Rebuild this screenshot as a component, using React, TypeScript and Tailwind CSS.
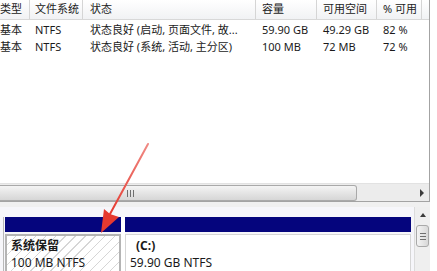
import React from 'react';

const font = "font-['Noto_Sans','Noto_Sans_CJK_SC',sans-serif]";

type Row = string[];

const rows: Row[] = [
  ['基本', 'NTFS', '状态良好 (启动, 页面文件, 故...', '59.90 GB', '49.29 GB', '82 %'],
  ['基本', 'NTFS', '状态良好 (系统, 活动, 主分区)', '100 MB', '72 MB', '72 %'],
];

const headers = ['类型', '文件系统', '状态', '容量', '可用空间', '% 可用'];
const widths = ['w-[30px]', 'w-[53px]', 'w-[173px]', 'w-[61px]', 'w-[60px]', 'w-[45px]'];
const pads = ['pl-0', 'pl-[5px]', 'pl-[7px]', 'pl-[6px]', 'pl-[6px]', 'pl-[6px]'];

function ListPane() {
  return (
    <div className="flex h-[202px] w-[430px] flex-col border-r border-b border-[#a3a3a3] bg-white">
      {/* column headers */}
      <div className="flex h-[20px] border-b border-[#d8d8d8] bg-gradient-to-b from-white to-[#f1f2f4]">
        {headers.map((h, i) => (
          <div
            key={h}
            className={`${widths[i]} ${pads[i]} flex shrink-0 items-center border-r border-[#d5d5d5] text-[11px] whitespace-nowrap text-[#222]`}
          >
            {h}
          </div>
        ))}
        <div className="flex-1" />
      </div>

      {/* volume rows */}
      <div className="flex flex-col pt-[1px]">
        {rows.map((r, ri) => (
          <div key={ri} className="flex h-[17px] items-center">
            {r.map((c, i) => (
              <div
                key={i}
                className={`${widths[i]} ${pads[i]} shrink-0 overflow-hidden text-[11px] leading-[17px] whitespace-nowrap text-[#1a1a1a]`}
              >
                {c}
              </div>
            ))}
          </div>
        ))}
      </div>

      <div className="flex-1" />

      {/* horizontal scrollbar */}
      <div className="flex h-[18px] items-center border-t border-[#e2e2e2] bg-[#ececec]">
        <div className="relative h-[16px] w-[357px] rounded-r-[3px] border border-l-0 border-[#a9a9a9] bg-gradient-to-b from-[#f4f4f4] to-[#d6d6d6]">
          <div className="absolute top-[4px] left-[127px] flex gap-[2px]">
            <span className="h-[7px] w-[1px] bg-[#6f6f6f]" />
            <span className="h-[7px] w-[1px] bg-[#6f6f6f]" />
            <span className="h-[7px] w-[1px] bg-[#6f6f6f]" />
          </div>
        </div>
        <div className="flex-1" />
        <div className="flex w-[14px] items-center justify-center">
          <span className="h-0 w-0 border-y-[4px] border-l-[4px] border-y-transparent border-l-[#3c3c3c]" />
        </div>
      </div>
    </div>
  );
}

function DiskPane() {
  return (
    <div className="flex h-[64px] w-[430px]">
      <div className="flex flex-1 flex-col bg-[#f6f6fa] pt-[10px] pl-[3px]">
        <div className="flex flex-1 border-l border-[#b8b8b8] pl-[1px]">
          {/* 系统保留 */}
          <div className="flex w-[116px] flex-col">
            <div className="h-[15px] bg-[#05057d]" />
            <div className="mt-[2px] flex-1 border-2 border-[#b4b4b4] bg-[repeating-linear-gradient(135deg,#ffffff_0px,#ffffff_6px,#d6d6d6_6px,#d6d6d6_7px)] pt-[1px] pl-[4px] text-[12px] leading-[17px] text-[#1a1a1a]">
              <div className="font-bold">系统保留</div>
              <div>100 MB NTFS</div>
            </div>
          </div>
          <div className="w-[4px] bg-white" />
          {/* C: */}
          <div className="flex w-[286px] flex-col">
            <div className="h-[15px] bg-[#05057d]" />
            <div className="mt-[2px] flex-1 border border-[#d6d6d6] bg-white pt-[2px] pl-[4px] text-[12px] leading-[17px] text-[#1a1a1a]">
              <div className="pl-[6px] font-bold">(C:)</div>
              <div>59.90 GB NTFS</div>
            </div>
          </div>
          <div className="flex-1" />
        </div>
      </div>

      {/* vertical scrollbar */}
      <div className="flex w-[16px] flex-col items-center border-l border-[#dcdcdc] bg-[#efefef]">
        <div className="flex h-[16px] items-center justify-center">
          <span className="h-0 w-0 border-x-[3px] border-b-[4px] border-x-transparent border-b-[#3c3c3c]" />
        </div>
        <div className="mt-[2px] flex h-[22px] w-[13px] flex-col items-center justify-center gap-[2px] rounded-[3px] border border-[#a9a9a9] bg-gradient-to-r from-[#f4f4f4] to-[#d8d8d8]">
          <span className="h-[1px] w-[6px] bg-[#6f6f6f]" />
          <span className="h-[1px] w-[6px] bg-[#6f6f6f]" />
          <span className="h-[1px] w-[6px] bg-[#6f6f6f]" />
        </div>
      </div>
    </div>
  );
}

export default function App() {
  return (
    <div className={`relative h-[271px] w-[437px] overflow-hidden bg-white ${font}`}>
      <ListPane />
      <div className="h-[5px] w-[430px] bg-[#f0f0f0]" />
      <DiskPane />

      {/* red annotation arrow */}
      <svg className="pointer-events-none absolute top-0 left-0" width="437" height="271">
        <defs>
          <linearGradient id="shaft" x1="148" y1="144" x2="110" y2="214" gradientUnits="userSpaceOnUse">
            <stop offset="0" stopColor="#f08a84" />
            <stop offset="1" stopColor="#e5392f" />
          </linearGradient>
        </defs>
        <line x1="148" y1="144" x2="110" y2="214" stroke="url(#shaft)" strokeWidth="2" strokeLinecap="round" />
        <polygon points="101,233 104,209 110,214 119,217" fill="#e5392f" />
      </svg>
    </div>
  );
}
